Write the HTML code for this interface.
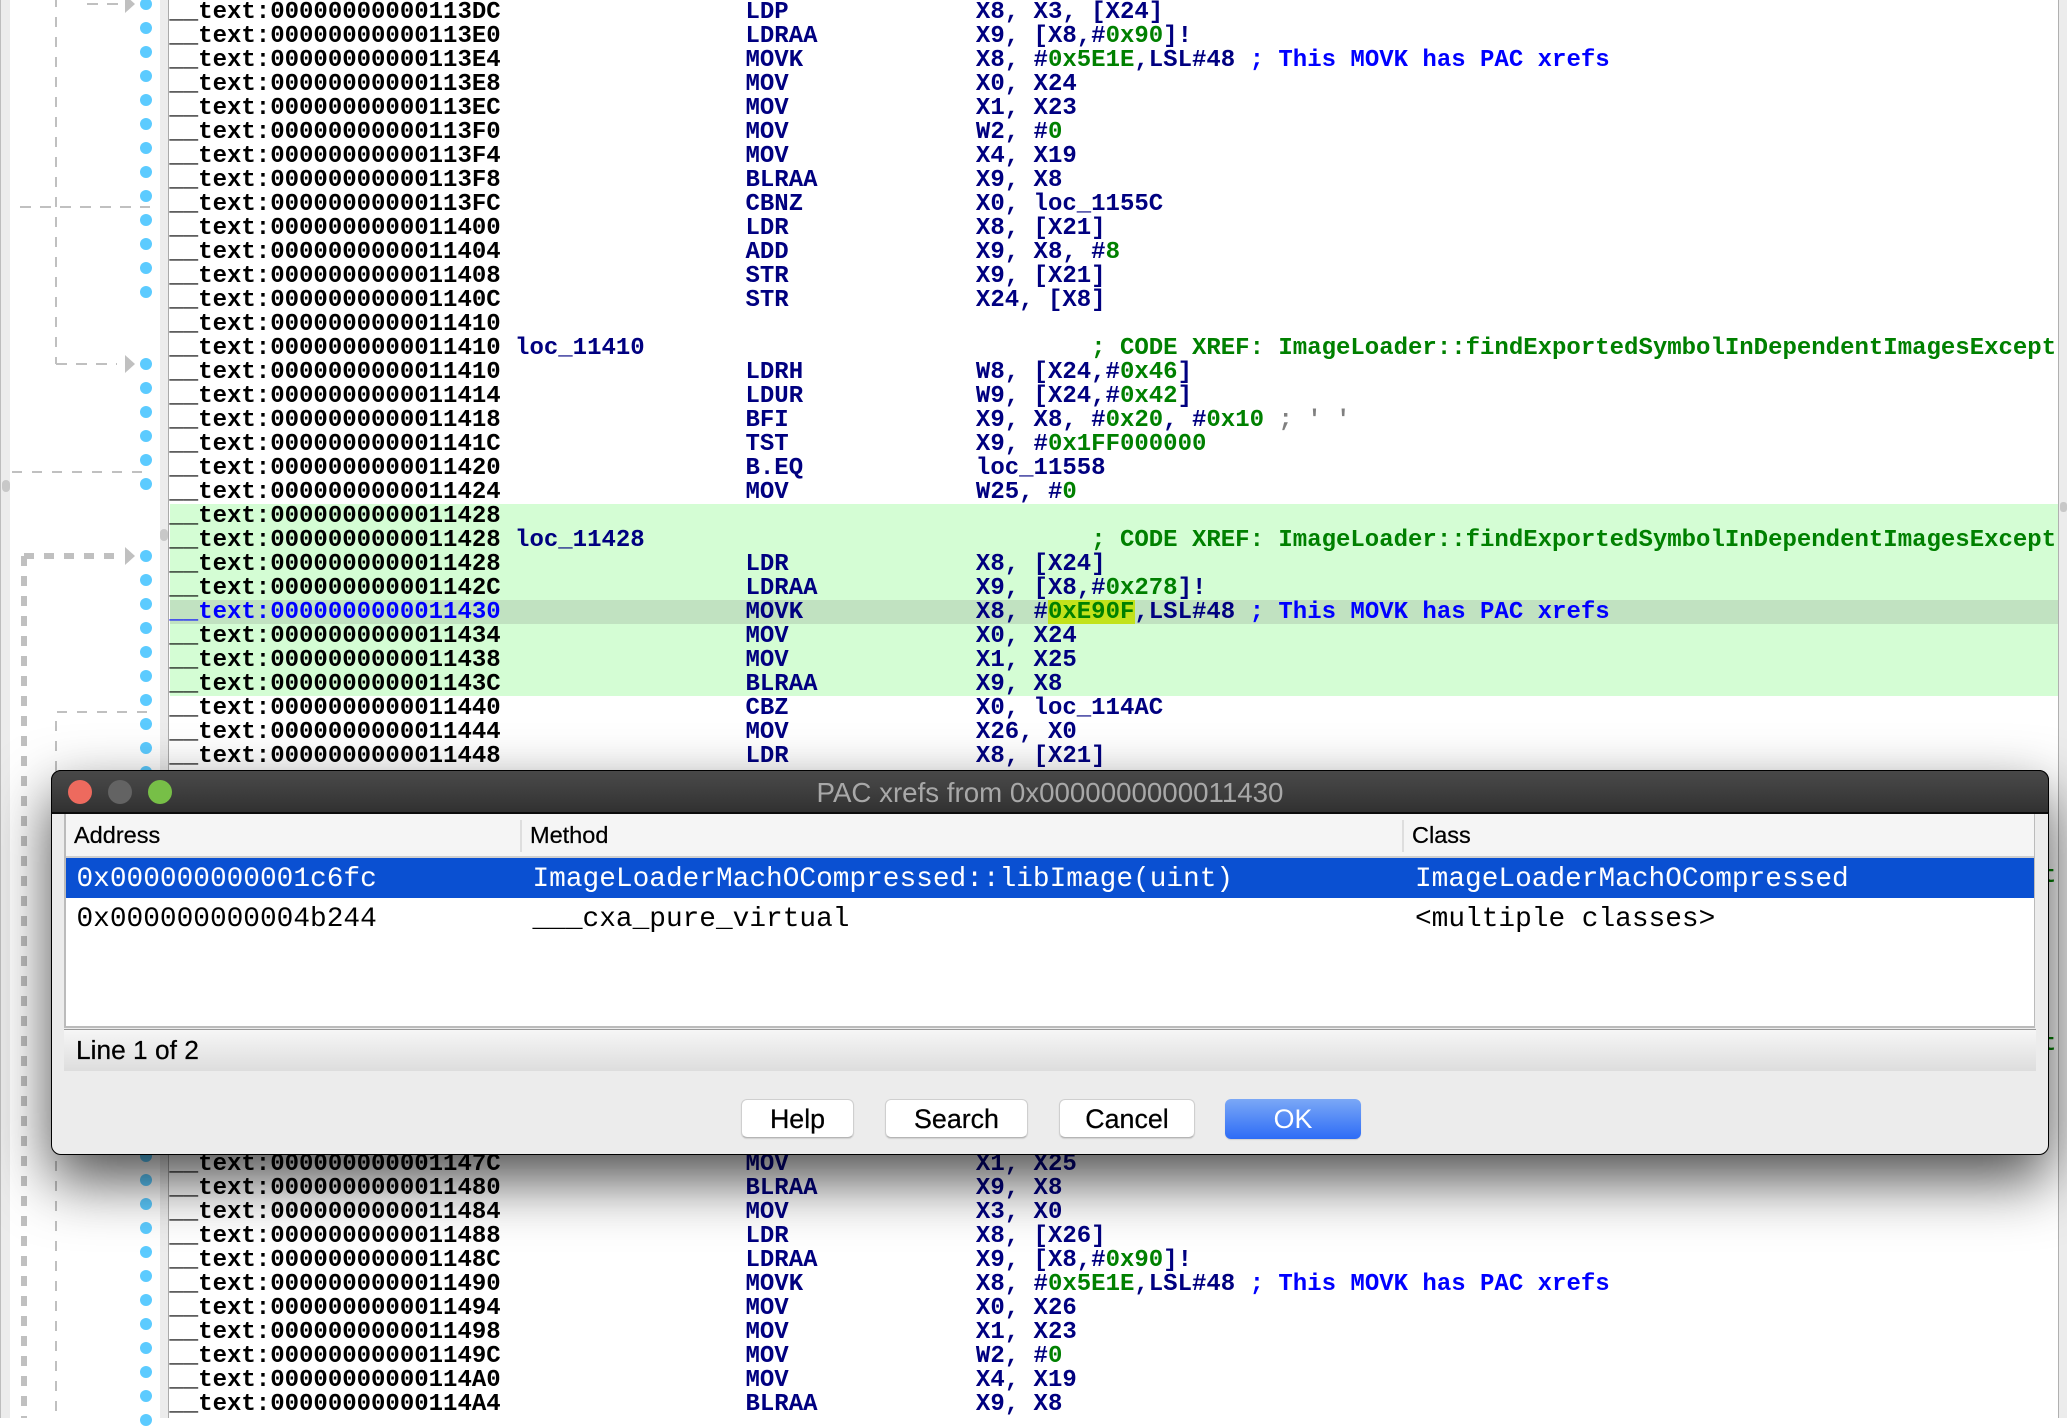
<!DOCTYPE html>
<html>
<head>
<meta charset="utf-8">
<title>PAC xrefs</title>
<style>
html,body{margin:0;padding:0;background:#fff}
body{position:relative;width:2067px;height:1418px;overflow:hidden;font-family:"Liberation Sans",Arial,sans-serif}
.a{position:absolute;box-sizing:border-box}
.dot{position:absolute;left:140px;width:12px;height:12px;border-radius:50%;background:#5ccbff}
pre{position:absolute;left:169.4px;top:1px;margin:0;font:bold 24px/24px "Liberation Mono",monospace;color:#000080;white-space:pre}
pre b{color:#000}
pre b.s{color:#00f}
pre i{font-style:normal;color:#008000}
pre u{text-decoration:none;color:#00f}
pre s{text-decoration:none;color:#808080}
.hd{position:absolute;top:821px;font-size:23.5px;line-height:28px;color:#000;-webkit-text-stroke:.25px #000}
.sep{position:absolute;top:820px;width:2px;height:32px;background:#dedede}
.cell{position:absolute;font:27.8px/40px "Liberation Mono",monospace;white-space:pre;color:#000}
.w{color:#fff}
.btn{position:absolute;top:1099px;height:39px;background:#fff;border:1px solid #cfcfcf;border-bottom-color:#b5b5b5;border-radius:6px;box-shadow:0 1px 1px rgba(0,0,0,.12);text-align:center;font-size:26.8px;line-height:38px;color:#000;box-sizing:border-box;-webkit-text-stroke:.25px #000}
</style>
</head>
<body>
<!-- side strips -->
<div class="a" style="left:0;top:0;width:10px;height:1418px;background:#ececec;border-left:1px solid #bdbdbd"></div>
<div class="a" style="left:160px;top:0;width:9px;height:1418px;background:#ececec;border-right:1px solid #aaa"></div>
<div class="a" style="left:2058px;top:0;width:9px;height:1418px;background:#ececec;border-left:1px solid #b0b0b0"></div>
<div class="a" style="left:2px;top:480px;width:8px;height:12px;border-radius:4px;background:#c8c8c8"></div>
<div class="a" style="left:160px;top:529px;width:8px;height:12px;border-radius:4px;background:#c8c8c8"></div>
<div class="a" style="left:2060px;top:502px;width:7px;height:10px;border-radius:3px;background:#c8c8c8"></div>

<!-- row backgrounds -->
<div class="a" style="left:170px;top:504px;width:1888px;height:192px;background:#d4fdd4"></div>
<div class="a" style="left:170px;top:600px;width:1888px;height:24px;background:#c1e2c1"></div>
<div class="a" style="left:1048.4px;top:600px;width:86.4px;height:24px;background:#c2e21b"></div>

<!-- flow arrows -->
<svg class="a" style="left:0;top:0" width="170" height="1418" viewBox="0 0 170 1418">
<g fill="none" stroke="#c0c0c0" stroke-width="2">
<path d="M56 -3V364" stroke-dasharray="10 10"/>
<path d="M56 364H117" stroke-dasharray="11 9"/>
<path d="M87 4H118" stroke-dasharray="11 9"/>
<path d="M20 207H150" stroke-dasharray="11 9"/>
<path d="M12 472H142" stroke-dasharray="10 10"/>
<path d="M147 712H56V1418" stroke-dasharray="10 10"/>
</g>
<g fill="none" stroke="#c0c0c0" stroke-width="6">
<path d="M24 556H118" stroke-dasharray="10 10"/>
<path d="M24 556V1418" stroke-dasharray="10 10"/>
</g>
<g fill="#c0c0c0">
<path d="M125 -5L135 4L125 13Z"/>
<path d="M125 355L135 364L125 373Z"/>
<path d="M125 547L135 556L125 565Z"/>
</g>
</svg>

<!-- dots -->
<div class="dot" style="top:-2px"></div><div class="dot" style="top:22px"></div><div class="dot" style="top:46px"></div><div class="dot" style="top:70px"></div><div class="dot" style="top:94px"></div><div class="dot" style="top:118px"></div><div class="dot" style="top:142px"></div><div class="dot" style="top:166px"></div><div class="dot" style="top:190px"></div><div class="dot" style="top:214px"></div><div class="dot" style="top:238px"></div><div class="dot" style="top:262px"></div><div class="dot" style="top:286px"></div>
<div class="dot" style="top:358px"></div><div class="dot" style="top:382px"></div><div class="dot" style="top:406px"></div><div class="dot" style="top:430px"></div><div class="dot" style="top:454px"></div><div class="dot" style="top:478px"></div>
<div class="dot" style="top:550px"></div><div class="dot" style="top:574px"></div><div class="dot" style="top:598px"></div><div class="dot" style="top:622px"></div><div class="dot" style="top:646px"></div><div class="dot" style="top:670px"></div><div class="dot" style="top:694px"></div><div class="dot" style="top:718px"></div><div class="dot" style="top:742px"></div><div class="dot" style="top:766px"></div>
<div class="dot" style="top:1150px"></div><div class="dot" style="top:1174px"></div><div class="dot" style="top:1198px"></div><div class="dot" style="top:1222px"></div><div class="dot" style="top:1246px"></div><div class="dot" style="top:1270px"></div><div class="dot" style="top:1294px"></div><div class="dot" style="top:1318px"></div><div class="dot" style="top:1342px"></div><div class="dot" style="top:1366px"></div><div class="dot" style="top:1390px"></div><div class="dot" style="top:1414px"></div>

<pre><b>__text:00000000000113DC</b>                 LDP             X8, X3, [X24]
<b>__text:00000000000113E0</b>                 LDRAA           X9, [X8,#<i>0x90</i>]!
<b>__text:00000000000113E4</b>                 MOVK            X8, #<i>0x5E1E</i>,LSL#48 <u>; This MOVK has PAC xrefs</u>
<b>__text:00000000000113E8</b>                 MOV             X0, X24
<b>__text:00000000000113EC</b>                 MOV             X1, X23
<b>__text:00000000000113F0</b>                 MOV             W2, #<i>0</i>
<b>__text:00000000000113F4</b>                 MOV             X4, X19
<b>__text:00000000000113F8</b>                 BLRAA           X9, X8
<b>__text:00000000000113FC</b>                 CBNZ            X0, loc_1155C
<b>__text:0000000000011400</b>                 LDR             X8, [X21]
<b>__text:0000000000011404</b>                 ADD             X9, X8, #<i>8</i>
<b>__text:0000000000011408</b>                 STR             X9, [X21]
<b>__text:000000000001140C</b>                 STR             X24, [X8]
<b>__text:0000000000011410</b>
<b>__text:0000000000011410</b> loc_11410                               <i>; CODE XREF: ImageLoader::findExportedSymbolInDependentImagesExcept</i>
<b>__text:0000000000011410</b>                 LDRH            W8, [X24,#<i>0x46</i>]
<b>__text:0000000000011414</b>                 LDUR            W9, [X24,#<i>0x42</i>]
<b>__text:0000000000011418</b>                 BFI             X9, X8, #<i>0x20</i>, #<i>0x10</i> <s>; ' '</s>
<b>__text:000000000001141C</b>                 TST             X9, #<i>0x1FF000000</i>
<b>__text:0000000000011420</b>                 B.EQ            loc_11558
<b>__text:0000000000011424</b>                 MOV             W25, #<i>0</i>
<b>__text:0000000000011428</b>
<b>__text:0000000000011428</b> loc_11428                               <i>; CODE XREF: ImageLoader::findExportedSymbolInDependentImagesExcept</i>
<b>__text:0000000000011428</b>                 LDR             X8, [X24]
<b>__text:000000000001142C</b>                 LDRAA           X9, [X8,#<i>0x278</i>]!
<b class="s">__text:0000000000011430</b>                 MOVK            X8, #<i>0xE90F</i>,LSL#48 <u>; This MOVK has PAC xrefs</u>
<b>__text:0000000000011434</b>                 MOV             X0, X24
<b>__text:0000000000011438</b>                 MOV             X1, X25
<b>__text:000000000001143C</b>                 BLRAA           X9, X8
<b>__text:0000000000011440</b>                 CBZ             X0, loc_114AC
<b>__text:0000000000011444</b>                 MOV             X26, X0
<b>__text:0000000000011448</b>                 LDR             X8, [X21]




                                                                <i>; CODE XREF: ImageLoader::findExportedSymbolInDependentImagesExcept</i>






                                                                <i>; CODE XREF: ImageLoader::findExportedSymbolInDependentImagesExcept</i>




<b>__text:000000000001147C</b>                 MOV             X1, X25
<b>__text:0000000000011480</b>                 BLRAA           X9, X8
<b>__text:0000000000011484</b>                 MOV             X3, X0
<b>__text:0000000000011488</b>                 LDR             X8, [X26]
<b>__text:000000000001148C</b>                 LDRAA           X9, [X8,#<i>0x90</i>]!
<b>__text:0000000000011490</b>                 MOVK            X8, #<i>0x5E1E</i>,LSL#48 <u>; This MOVK has PAC xrefs</u>
<b>__text:0000000000011494</b>                 MOV             X0, X26
<b>__text:0000000000011498</b>                 MOV             X1, X23
<b>__text:000000000001149C</b>                 MOV             W2, #<i>0</i>
<b>__text:00000000000114A0</b>                 MOV             X4, X19
<b>__text:00000000000114A4</b>                 BLRAA           X9, X8</pre>

<!-- dialog -->
<div class="a" style="left:51px;top:770px;width:1998px;height:385px;background:#ececec;border:1px solid #000;border-radius:10px;box-shadow:0 25px 60px rgba(0,0,0,.7)"></div>
<div class="a" style="left:51px;top:770px;width:1998px;height:44px;background:linear-gradient(#484848,#424242 35%,#313131);border:1px solid #000;border-bottom:2px solid #0c0c0c;border-radius:10px 10px 0 0"></div>
<div class="a" style="left:68px;top:780px;width:24px;height:24px;border-radius:50%;background:#ed6a5e"></div>
<div class="a" style="left:108px;top:780px;width:24px;height:24px;border-radius:50%;background:#636363"></div>
<div class="a" style="left:148px;top:780px;width:24px;height:24px;border-radius:50%;background:#77bf47"></div>
<div class="a" style="left:550px;top:776px;width:1000px;height:34px;text-align:center;font-size:27.7px;line-height:34px;color:#a8a8a8;white-space:pre">PAC xrefs from 0x0000000000011430</div>

<!-- table -->
<div class="a" style="left:64px;top:814px;width:1971px;height:214px;background:#fff;border:solid #bbb;border-width:0 1px 2px 2px"></div>
<div class="a" style="left:66px;top:814px;width:1968px;height:42px;background:#f5f5f5"></div>
<div class="a" style="left:66px;top:856px;width:1968px;height:2px;background:#cfcfcf"></div>
<div class="hd" style="left:74px">Address</div>
<div class="sep" style="left:520px"></div>
<div class="hd" style="left:530px">Method</div>
<div class="sep" style="left:1402px"></div>
<div class="hd" style="left:1412px">Class</div>
<div class="a" style="left:66px;top:858px;width:1968px;height:40px;background:#0a50d2"></div>
<div class="cell w" style="left:76.5px;top:860px">0x000000000001c6fc</div>
<div class="cell w" style="left:532.5px;top:860px">ImageLoaderMachOCompressed::libImage(uint)</div>
<div class="cell w" style="left:1415px;top:860px">ImageLoaderMachOCompressed</div>
<div class="cell" style="left:76.5px;top:900px">0x000000000004b244</div>
<div class="cell" style="left:532.5px;top:900px">___cxa_pure_virtual</div>
<div class="cell" style="left:1415px;top:900px">&lt;multiple classes&gt;</div>

<!-- status -->
<div class="a" style="left:64px;top:1029px;width:1972px;height:42px;background:linear-gradient(#f6f6f6,#dddddd);border-top:1px solid #999"></div>
<div class="a" style="left:76px;top:1034px;font-size:26.3px;line-height:32px;color:#000;-webkit-text-stroke:.25px #000">Line 1 of 2</div>

<!-- buttons -->
<div class="btn" style="left:741px;width:113px">Help</div>
<div class="btn" style="left:885px;width:143px">Search</div>
<div class="btn" style="left:1059px;width:136px">Cancel</div>
<div class="btn" style="left:1225px;width:136px;height:40px;border:none;background:linear-gradient(#7ba8f6,#2d6cf6);color:#fff;line-height:40px;-webkit-text-stroke:0">OK</div>
</body>
</html>
